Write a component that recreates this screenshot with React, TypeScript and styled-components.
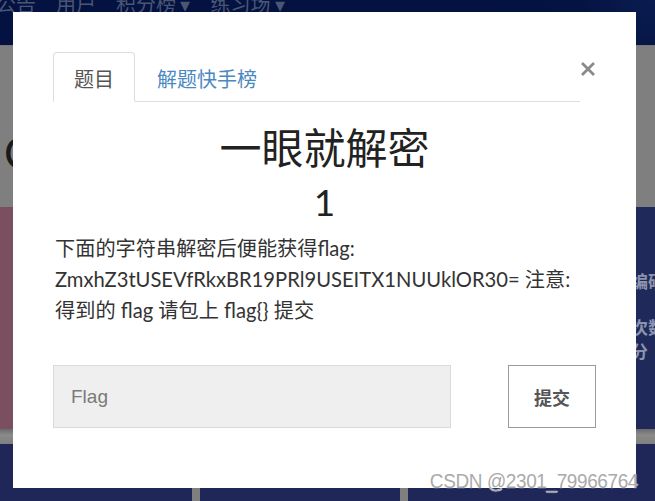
import React from "react";
import styled, { createGlobalStyle } from "styled-components";

const Global = createGlobalStyle`
  html, body { margin: 0; padding: 0; }
  body {
    width: 655px; height: 501px; overflow: hidden;
    font-family: Lato, "Noto Sans CJK SC", sans-serif;
    background: #7f7f7f;
  }
`;

const Page = styled.div`
  position: relative;
  width: 655px;
  height: 501px;
  overflow: hidden;
  display: flex;
  flex-direction: column;
  background: #7f7f7f;
`;

const NavBar = styled.div`
  height: 45px;
  flex: none;
  background: radial-gradient(circle at 660px -10px, #0b1d52 0, #041442 80px, #031240 200px);
  display: flex;
  align-items: flex-start;
  gap: 20px;
  overflow: hidden;
`;

const NavItem = styled.span`
  font-family: "Noto Sans CJK SC", sans-serif;
  font-size: 20px;
  line-height: 20px;
  margin-top: -6px;
  color: #4a5675;
  white-space: nowrap;
  &:first-child { margin-left: -4px; }
`;

const Hero = styled.div`
  height: 162px;
  flex: none;
  background: #7f7f7f;
  border-top: 1px solid #777;
  display: flex;
  align-items: flex-start;
  padding-top: 84px;
  box-sizing: border-box;
`;

const HeroTitle = styled.span`
  font-family: Lato, sans-serif;
  font-size: 44px;
  line-height: 44px;
  color: #1a1a1a;
  margin-left: 4px;
`;

const CardRow = styled.div`
  height: 222px;
  flex: none;
  display: flex;
  justify-content: space-between;
`;

const Card = styled.div<{ $bg: string }>`
  width: 120px;
  background: ${(p) => p.$bg};
  display: flex;
  flex-direction: column;
  padding-top: 62px;
  box-sizing: border-box;
`;

const CardText = styled.span<{ $gap?: number }>`
  font-family: "Noto Sans CJK SC", sans-serif;
  font-weight: 700;
  font-size: 17px;
  line-height: 24px;
  color: #8c93ad;
  white-space: nowrap;
  margin-left: 96px;
  margin-top: ${(p) => p.$gap ?? 0}px;
`;

const CardGap = styled.div`
  height: 15px;
  flex: none;
  background: linear-gradient(#6a6a6a, #8a8a8a 40%, #7f7f7f);
`;

const BottomRow = styled.div`
  flex: 1;
  display: flex;
  gap: 8px;
  margin-left: -8px;
`;

const BottomCard = styled.div`
  width: 200px;
  flex: none;
  background: #1e2758;
  &:last-child { flex: 1; }
`;

const Modal = styled.div`
  position: absolute;
  left: 13px;
  top: 12px;
  width: 623px;
  height: 476px;
  background: #fff;
  box-sizing: border-box;
  padding: 40px 40px 0 40px;
  display: flex;
  flex-direction: column;
`;

const Header = styled.div`
  display: flex;
  align-items: flex-start;
`;

const TabNav = styled.div`
  flex: 1;
  display: flex;
  border-bottom: 1px solid #dddddd;
`;

const Tab = styled.div<{ $active?: boolean }>`
  height: 50px;
  box-sizing: border-box;
  display: flex;
  align-items: center;
  font-family: "Noto Sans CJK SC", sans-serif;
  font-size: 20px;
  color: ${(p) => (p.$active ? "#555" : "#4a88c2")};
  border: 1px solid ${(p) => (p.$active ? "#dddddd" : "transparent")};
  border-bottom: ${(p) => (p.$active ? "1px solid #fff" : "none")};
  border-radius: 4px 4px 0 0;
  margin-bottom: -1px;
  padding: 2px 0 0 ${(p) => (p.$active ? "20px" : "21px")};
  width: ${(p) => (p.$active ? "82px" : "auto")};
`;

const CloseButton = styled.div`
  width: 16px;
  height: 16px;
  margin-top: 9px;
  display: flex;
  align-items: center;
  justify-content: center;
`;

const Title = styled.h2`
  margin: 20px 0 0;
  font-family: Lato, "Noto Sans CJK SC", sans-serif;
  font-weight: 400;
  font-size: 42px;
  line-height: 52px;
  text-align: center;
  color: #222;
`;

const Value = styled.h3`
  margin: 3px 0 0;
  font-family: Lato, sans-serif;
  font-weight: 400;
  font-size: 37px;
  line-height: 50px;
  text-align: center;
  color: #222;
`;

const Description = styled.p`
  margin: 6px 0 0 2px;
  font-family: Lato, "Noto Sans CJK SC", sans-serif;
  font-size: 20.2px;
  line-height: 31px;
  color: #333;
`;

const SubmitRow = styled.div`
  margin-top: 39px;
  display: flex;
  justify-content: space-between;
`;

const FlagInput = styled.input`
  width: 398px;
  height: 63px;
  box-sizing: border-box;
  background: #efefef;
  border: 1px solid #dadada;
  padding: 0 17px;
  font-family: "Liberation Sans", Arial, sans-serif;
  font-size: 19px;
  color: #555;
  outline: none;
  &::placeholder { color: #7a7a7a; }
`;

const SubmitButton = styled.button`
  width: 88px;
  height: 63px;
  box-sizing: border-box;
  background: #fff;
  border: 1px solid #9a9a9a;
  font-family: "Noto Sans CJK SC", sans-serif;
  font-weight: 700;
  font-size: 18px;
  color: #555;
  padding: 0;
`;

const Watermark = styled.div`
  position: absolute;
  right: 17px;
  bottom: 10px;
  font-family: "Liberation Sans", Arial, sans-serif;
  font-size: 19px;
  line-height: 19px;
  letter-spacing: -0.4px;
  color: #aaaaaa;
  text-shadow: 0 0 1px #fff, 0 0 1px #fff;
  white-space: nowrap;
  transform: scaleY(1.05);
`;

export default function App() {
  return (
    <>
      <Global />
      <Page>
        <NavBar>
          <NavItem>公告</NavItem>
          <NavItem>用户</NavItem>
          <NavItem>积分榜 ▾</NavItem>
          <NavItem>练习场 ▾</NavItem>
        </NavBar>
        <Hero>
          <HeroTitle>C</HeroTitle>
        </Hero>
        <CardRow>
          <Card $bg="#7a5061" />
          <Card $bg="#1f2a5b">
            <CardText>编码</CardText>
            <CardText $gap={22}>次数</CardText>
            <CardText>分</CardText>
          </Card>
        </CardRow>
        <CardGap />
        <BottomRow>
          <BottomCard />
          <BottomCard />
          <BottomCard />
        </BottomRow>

        <Modal>
          <Header>
            <TabNav>
              <Tab $active>题目</Tab>
              <Tab>解题快手榜</Tab>
            </TabNav>
            <CloseButton>
              <svg width="14" height="14" viewBox="0 0 14 14">
                <path d="M2 2 L12 12 M12 2 L2 12" stroke="#8a8a8a" strokeWidth="2.8" strokeLinecap="square" />
              </svg>
            </CloseButton>
          </Header>
          <Title>一眼就解密</Title>
          <Value>1</Value>
          <Description>
            下面的字符串解密后便能获得flag:
            <br />
            ZmxhZ3tUSEVfRkxBR19PRl9USEITX1NUUklOR30= 注意:
            <br />
            得到的 flag 请包上 flag{"{}"} 提交
          </Description>
          <SubmitRow>
            <FlagInput placeholder="Flag" />
            <SubmitButton>提交</SubmitButton>
          </SubmitRow>
        </Modal>
        <Watermark>CSDN @2301_79966764</Watermark>
      </Page>
    </>
  );
}
